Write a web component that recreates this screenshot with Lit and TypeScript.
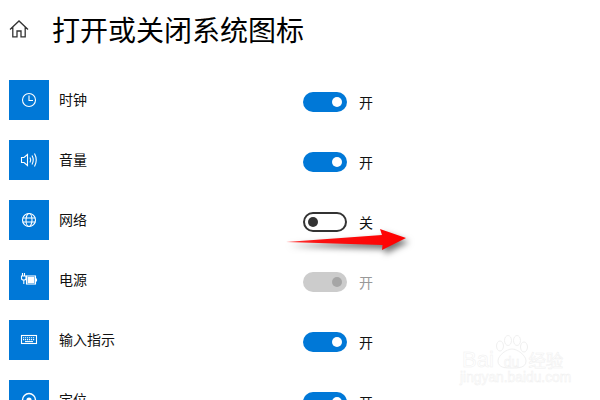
import { LitElement, css, html, svg } from 'lit';
import { customElement } from 'lit/decorators.js';

const icons = {
  clock: svg`<circle cx="10" cy="10" r="6.5"/><path d="M10 5.500V10.500H14"/>`,
  volume: svg`<path d="M2.500 7.500H5L8.500 4.500V15.500L5 12.500H2.500Z"/><path d="M11 7.500Q12.500 10 11 12.500"/><path d="M13 5.500Q15.500 10 13 14.500"/><path d="M15.500 3.500Q19 10 15.500 16.500"/>`,
  globe: svg`<circle cx="10" cy="10" r="6.500"/><ellipse cx="10" cy="10" rx="3" ry="6.500"/><path d="M3.500 8H16.500M3.500 12H16.500"/>`,
  power: svg`<path d="M3.500 3V6M5.500 3V6M2.500 6H7V8.500Q7 10 4.800 10Q2.500 10 2.500 8.500ZM4.800 10V14"/><rect x="7.500" y="6" width="9" height="8"/><rect class="fill" x="8.500" y="7" width="7" height="6"/><path d="M17.500 8.500V11.500"/>`,
  keyboard: svg`<rect x="2.500" y="5.500" width="15" height="8"/><path d="M4 7.800H16M4 9.600H16" stroke-dasharray="1.200 0.800"/><path d="M6 11.600H14"/>`,
  location: svg`<circle cx="10" cy="10" r="6.500" stroke-width="1.400"/><circle class="fill" cx="10" cy="10" r="2.600"/>`,
};

type IconName = keyof typeof icons;
type Row = { label: string; icon: IconName; state: 'on' | 'off' | 'disabled' };

const rows: Row[] = [
  { label: '时钟', icon: 'clock', state: 'on' },
  { label: '音量', icon: 'volume', state: 'on' },
  { label: '网络', icon: 'globe', state: 'off' },
  { label: '电源', icon: 'power', state: 'disabled' },
  { label: '输入指示', icon: 'keyboard', state: 'on' },
  { label: '定位', icon: 'location', state: 'on' },
];

@customElement('app-root')
export class AppRoot extends LitElement {
  render() {
    return html`
      <main class="page">
        <header>
          <svg class="home" viewBox="0 0 20 20">
            <path d="M1 10.500L10 2L19 10.500M3.800 8.200V17.800H8V12H12V17.800H16.200V8.200" />
          </svg>
          <h1>打开或关闭系统图标</h1>
        </header>
        <section class="list">
          ${rows.map(
            (r) => html`
              <div class="row">
                <div class="tile"><svg viewBox="0 0 20 20">${icons[r.icon]}</svg></div>
                <div class="label">${r.label}</div>
                <div class="control ${r.state}">
                  <span class="switch"><span class="knob"></span></span>
                  <span class="state">${r.state === 'off' ? '关' : '开'}</span>
                </div>
              </div>
            `,
          )}
        </section>

        <svg class="arrow" viewBox="0 0 140 40">
          <defs>
            <linearGradient id="shaft" x1="0" x2="1" y1="0" y2="0">
              <stop offset="0" stop-color="#ff3a3a" />
              <stop offset="0.3" stop-color="#fb1010" />
              <stop offset="1" stop-color="#fe0000" />
            </linearGradient>
          </defs>
          <path fill="url(#shaft)" d="M6 22L102 15L100 9L126 18L102 30L102.500 25Z" />
        </svg>

        <div class="mark">
          <svg class="paw" viewBox="0 0 36 34">
            <ellipse cx="7" cy="11" rx="3.500" ry="5" />
            <ellipse cx="15" cy="5.500" rx="3.500" ry="5" />
            <ellipse cx="24" cy="5.500" rx="3.500" ry="5" />
            <ellipse cx="31" cy="12" rx="3.500" ry="5" />
            <path d="M19 14C14 14 5 20 5 26C5 33 13 33 19 33C25 33 33 33 33 26C33 20 24 14 19 14Z" />
          </svg>
          <div class="brand">
            <span class="bai">Bai</span><span class="du">du</span><span class="cn">经验</span>
          </div>
          <div class="site">jingyan.baidu.com</div>
        </div>
      </main>
    `;
  }

  static styles = css`
    :host {
      display: block;
      width: 600px;
      height: 400px;
      overflow: hidden;
      background: #fff;
      font-family: 'Noto Sans CJK SC', 'Liberation Sans', sans-serif;
      color: #111;
    }

    .page {
      position: relative;
      height: 400px;
      overflow: hidden;
    }

    header {
      display: flex;
      align-items: center;
      gap: 23px;
      height: 58px;
      padding-left: 9px;
    }

    .home {
      width: 20px;
      height: 20px;
      margin-top: -1px;
      fill: none;
      stroke: #333;
      stroke-width: 1.3;
    }

    h1 {
      margin: 0;
      font-size: 28px;
      font-weight: 400;
      line-height: 40px;
      color: #000;
    }

    .list {
      display: flex;
      flex-direction: column;
      gap: 20px;
      padding: 22px 0 0 9px;
    }

    .row {
      display: flex;
      height: 40px;
      flex: none;
    }

    .tile {
      display: flex;
      align-items: center;
      justify-content: center;
      width: 40px;
      height: 40px;
      background: #0078d7;
    }

    .tile svg {
      width: 20px;
      height: 20px;
      fill: none;
      stroke: #fff;
      stroke-width: 1.1;
    }

    .tile .fill {
      fill: #fff;
      stroke: none;
    }

    .label {
      width: 244px;
      margin-left: 10px;
      font-size: 14px;
      line-height: 38px;
    }

    .control {
      display: flex;
      align-items: center;
      gap: 12px;
      height: 20px;
      margin-top: 12px;
      font-size: 14px;
    }

    .switch {
      display: flex;
      align-items: center;
      justify-content: flex-end;
      box-sizing: border-box;
      width: 44px;
      height: 20px;
      padding: 0 5px;
      border-radius: 10px;
      background: #0078d7;
    }

    .knob {
      width: 10px;
      height: 10px;
      border-radius: 50%;
      background: #fff;
    }

    .off .switch {
      justify-content: flex-start;
      padding: 0 3px;
      background: #fff;
      border: 2px solid #333;
    }

    .off .knob {
      background: #333;
    }

    .disabled .switch {
      background: #ccc;
    }

    .disabled .knob {
      background: #a6a6a6;
    }

    .disabled .state {
      color: #999;
    }

    .arrow {
      position: absolute;
      left: 280px;
      top: 220px;
      width: 140px;
      height: 40px;
      filter: drop-shadow(3px 4px 3px rgba(0, 0, 0, 0.55));
    }

    .mark {
      position: absolute;
      left: 460px;
      top: 335px;
      width: 110px;
      height: 50px;
      color: #fff;
      font-family: 'Liberation Sans', sans-serif;
      -webkit-text-stroke: 0.5px #f0f0f0;
    }

    .paw {
      position: absolute;
      left: 33px;
      top: 0;
      width: 36px;
      height: 34px;
      fill: #fff;
      stroke: #f0f0f0;
    }

    .brand {
      position: absolute;
      left: 2px;
      top: 14px;
      font-size: 22px;
      line-height: 22px;
      white-space: nowrap;
    }

    .du {
      margin-left: 10px;
      font-size: 14px;
    }

    .cn {
      margin-left: 9px;
      font-family: 'Noto Sans CJK SC', sans-serif;
      font-size: 17.5px;
    }

    .site {
      position: absolute;
      left: 0;
      top: 35px;
      font-size: 13.8px;
      line-height: 16px;
      white-space: nowrap;
    }
  `;
}

declare global {
  interface HTMLElementTagNameMap {
    'app-root': AppRoot;
  }
}
